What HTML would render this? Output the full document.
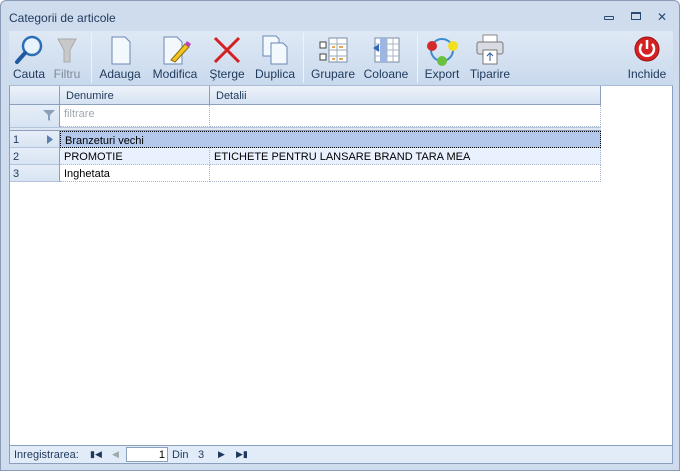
<!DOCTYPE html>
<html><head><meta charset="utf-8"><style>
*{margin:0;padding:0;box-sizing:border-box}
body{width:680px;height:471px;overflow:hidden;background:#fff;font-family:"Liberation Sans",sans-serif;font-size:11px;color:#000;position:relative}
.win{position:absolute;left:0;top:0;width:680px;height:471px;background:#cfdcee;border:1px solid #8a9bb5;border-radius:6px 6px 0 0}
.title{position:absolute;left:8px;top:10px;font-size:12px;color:#1e395b}
.tb{position:absolute;left:8px;top:30px;width:664px;height:55px;background:linear-gradient(#dfe9f5,#c9d9ed);border-bottom:1px solid #a9bcd6}
.btn{position:absolute;top:0;height:54px;text-align:center}
.btn span{position:absolute;top:36px;left:0;right:0;font-size:12px;color:#1e395b;white-space:nowrap}
.btn svg{position:absolute;top:3px;left:50%;margin-left:-16px}
.sep{position:absolute;top:2px;width:1px;height:50px;background:#b4c6dd;border-right:1px solid #eef3fa}
.grid{position:absolute;left:8px;top:85px;width:664px;height:360px;background:#fff;border:1px solid #8ba0bc;border-top:none}
.hdr{position:absolute;top:0;height:19px;background:linear-gradient(#eef3fa,#d5e2f2);border-bottom:1px solid #8ba0bc;color:#1e395b;padding:4px 6px 0}
.cell{position:absolute;height:17px;padding:3px 4px 0;border-right:1px dotted #a9b6c8;border-bottom:1px dotted #a9b6c8;white-space:nowrap}
.rn{position:absolute;left:0;width:50px;height:17px;background:linear-gradient(#e6eef8,#d8e4f3);border-bottom:1px solid #b3c4dc;border-right:1px solid #8ba0bc;color:#1e395b;padding:3px 3px 0}
.status{position:absolute;left:8px;top:444px;width:664px;height:19px;background:#e2ecf9;border:1px solid #8ba0bc;color:#1e395b;font-size:11px}
.status div{position:absolute;top:3px}
</style></head><body>
<div class="win">
<div class="title">Categorii de articole</div>
<div style="position:absolute;left:603px;top:15px;width:10px;height:4px;border:1px solid #2b4a6e;border-radius:1px"></div>
<div style="position:absolute;left:630px;top:11px;width:10px;height:8px;border:1px solid #2b4a6e;border-top-width:2px"></div>
<div style="position:absolute;left:656px;top:9px;font-size:12px;color:#2b4a6e">✕</div>

<div class="tb">
 <div class="btn" style="left:2px;width:36px"><svg width="32" height="32"><circle cx="19" cy="12" r="9" fill="#e8f3fc" stroke="#2d6fb5" stroke-width="2.5"/><line x1="12" y1="19" x2="4" y2="28" stroke="#1f5aa0" stroke-width="4" stroke-linecap="round"/></svg><span>Cauta</span></div>
 <div class="btn" style="left:40px;width:36px"><svg width="32" height="32"><path d="M7 5 H25 L19 16 V28 H13 V16 Z" fill="#c8c8c8" stroke="#aaa"/></svg><span style="color:#7f8a98">Filtru</span></div>
 <div class="sep" style="left:82px"></div>
 <div class="btn" style="left:88px;width:46px"><svg width="32" height="32"><path d="M8 3 H21 L26 8 V30 H8 Z" fill="#f3f8fd" stroke="#6a89b5"/></svg><span>Adauga</span></div>
 <div class="btn" style="left:140px;width:52px"><svg width="32" height="32"><path d="M5 3 H18 L23 8 V30 H5 Z" fill="#f3f8fd" stroke="#6a89b5"/><path d="M12 26 L26 10 L30 13 L16 28 Z" fill="#f2c420" stroke="#8a6a10"/><path d="M26 10 L28 7 L32 10 L30 13Z" fill="#c040c0"/></svg><span>Modifica</span></div>
 <div class="btn" style="left:198px;width:40px"><svg width="32" height="32"><path d="M4 4 L28 28 M28 4 L4 28" stroke="#d42020" stroke-width="3"/></svg><span>Şterge</span></div>
 <div class="btn" style="left:244px;width:44px"><svg width="32" height="32"><path d="M4 2 H17 L20 5 V22 H4 Z" fill="#f3f8fd" stroke="#6a89b5"/><path d="M12 9 H24 L28 13 V30 H12 Z" fill="#f3f8fd" stroke="#6a89b5"/></svg><span>Duplica</span></div>
 <div class="sep" style="left:294px"></div>
 <div class="btn" style="left:300px;width:48px"><svg width="32" height="32"><rect x="12" y="4" width="18" height="24" fill="#fff" stroke="#7a8ca5"/><path d="M12 10H30M12 16H30M12 22H30M20 4V28" stroke="#9aa8ba"/><path d="M15 13h3M22 13h4M15 25h3M22 25h4" stroke="#e08a20" stroke-width="1.5"/><rect x="3" y="8" width="6" height="6" fill="#fff" stroke="#444"/><rect x="3" y="20" width="6" height="6" fill="#fff" stroke="#444"/></svg><span>Grupare</span></div>
 <div class="btn" style="left:352px;width:50px"><svg width="32" height="32"><rect x="5" y="4" width="24" height="24" fill="#fff" stroke="#7a8ca5"/><rect x="10" y="4" width="7" height="24" fill="#9bb6e6"/><path d="M5 10H29M5 16H29M5 22H29M17 4V28M23 4V28" stroke="#a8b6c8"/><path d="M3 14 L9 10 V18Z" fill="#2f6bb8"/></svg><span>Coloane</span></div>
 <div class="sep" style="left:408px"></div>
 <div class="btn" style="left:414px;width:38px"><svg width="32" height="32"><circle cx="16" cy="16" r="11" fill="none" stroke="#3a8ad0" stroke-width="2"/><circle cx="6" cy="12" r="5" fill="#d52a2a"/><circle cx="27" cy="12" r="5" fill="#f2e020"/><circle cx="16" cy="27" r="5" fill="#6cc040"/></svg><span>Export</span></div>
 <div class="btn" style="left:456px;width:50px"><svg width="32" height="32"><rect x="9" y="1" width="14" height="8" fill="#fff" stroke="#888"/><rect x="3" y="8" width="26" height="12" rx="2" fill="#d8dce2" stroke="#777"/><rect x="9" y="16" width="14" height="14" fill="#fff" stroke="#777"/><path d="M16 27V20M13 22l3-3 3 3" stroke="#2b5a9a" fill="none"/></svg><span>Tiparire</span></div>
 <div class="btn" style="left:614px;width:48px"><svg width="32" height="32"><circle cx="16" cy="15" r="12" fill="#d42222" stroke="#9a1010"/><path d="M11 10 A7 7 0 1 0 21 10" stroke="#fff" stroke-width="2.5" fill="none"/><path d="M16 6V15" stroke="#fff" stroke-width="2.5"/></svg><span>Inchide</span></div>
</div>

<div class="grid">
 <div class="hdr" style="left:0;width:50px;border-right:1px solid #8ba0bc"></div>
 <div class="hdr" style="left:50px;width:150px;border-right:1px solid #8ba0bc">Denumire</div>
 <div class="hdr" style="left:200px;width:391px;border-right:1px solid #8ba0bc">Detalii</div>
 <div class="rn" style="top:19px;height:22px;border-bottom:none"><svg style="position:absolute;right:4px;top:5px" width="12" height="11"><path d="M0 0H12L7 5V11L5 10V5Z" fill="#8aa0b8"/></svg></div>
 <div class="cell" style="left:50px;top:19px;width:150px;height:22px;color:#a0a8b4">filtrare</div>
 <div class="cell" style="left:200px;top:19px;width:391px;height:22px"></div>
 <div style="position:absolute;left:0;top:41px;width:591px;height:4px;background:#dde6f2;border-top:1px solid #b3c4dc;border-bottom:1px solid #8ba0bc"></div>
 <div class="rn" style="top:45px">1<svg style="position:absolute;left:37px;top:4px" width="6" height="9"><path d="M0 0L6 4.5L0 9Z" fill="#5b80b0"/></svg></div>
 <div class="cell" style="left:50px;top:45px;width:541px;background:#b3c8eb;border:1px dotted #000">Branzeturi vechi</div>
 <div class="rn" style="top:62px">2</div>
 <div class="cell" style="left:50px;top:62px;width:150px;background:#e8f1fd">PROMOTIE</div>
 <div class="cell" style="left:200px;top:62px;width:391px;background:#e8f1fd">ETICHETE PENTRU LANSARE BRAND TARA MEA</div>
 <div class="rn" style="top:79px">3</div>
 <div class="cell" style="left:50px;top:79px;width:150px">Inghetata</div>
 <div class="cell" style="left:200px;top:79px;width:391px"></div>
</div>

<div class="status">
 <div style="left:4px">Inregistrarea:</div>
 <div style="left:80px;font-size:9px">▮◀</div>
 <div style="left:102px;font-size:9px;color:#9aa">◀</div>
 <div style="left:116px;top:1px;width:42px;height:15px;background:#fff;border:1px solid #8ba0bc;text-align:right;padding:1px 2px 0;color:#000">1</div>
 <div style="left:162px">Din</div>
 <div style="left:188px">3</div>
 <div style="left:208px;font-size:9px">▶</div>
 <div style="left:226px;font-size:9px">▶▮</div>
</div>
</div>
</body></html>
